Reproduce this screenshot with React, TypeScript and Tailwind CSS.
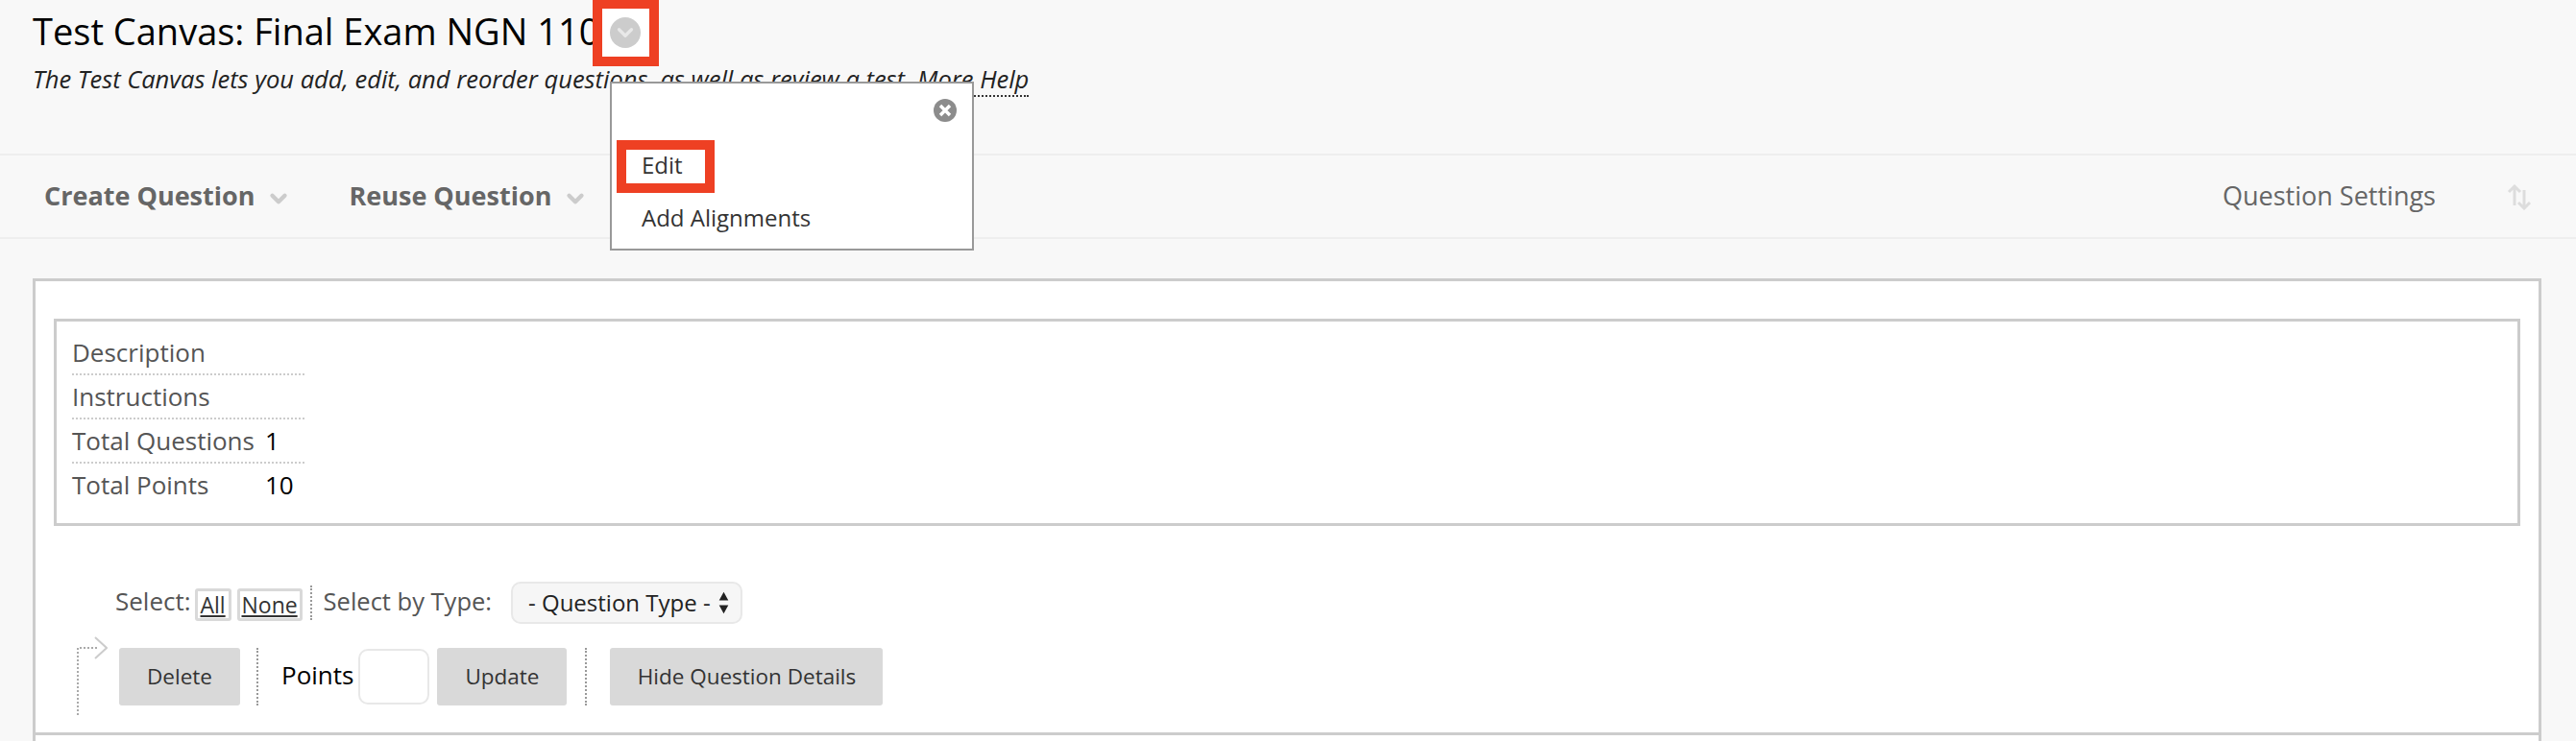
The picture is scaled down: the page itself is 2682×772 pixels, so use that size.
import { ChevronDown } from 'lucide-react';

const FONT = "font-['Open_Sans',sans-serif]";

const summary = [
  { label: 'Description', value: '' },
  { label: 'Instructions', value: '' },
  { label: 'Total Questions', value: '1' },
  { label: 'Total Points', value: '10' },
];

const GrayButton = ({ label, width }: { label: string; width: string }) => (
  <button type="button" className={`${width} h-[60px] shrink-0 rounded-[3px] bg-[#d9d9d9] text-[22.5px] text-[#333]`}>
    {label}
  </button>
);

const Separator = () => <div className="h-[60px] w-0 shrink-0 border-l-2 border-dotted border-[#999]" />;

export default function App() {
  return (
    <div className={`${FONT} relative h-[772px] w-[2682px] overflow-hidden bg-[#f8f8f8]`}>
      <header className="h-[160px] pl-[34px] pt-[6px]">
        <h1 className="whitespace-nowrap text-[38px] leading-[52px] text-black">Test Canvas: Final Exam NGN 110</h1>
        <p className="mt-[7px] whitespace-nowrap text-[25.5px] leading-[34px] text-[#222] italic">
          The Test Canvas lets you add, edit, and reorder questions, as well as review a test.{' '}
          <span className="border-b-2 border-dotted border-[#333]">More Help</span>
        </p>
      </header>

      <nav className="flex h-[89px] items-center border-y-2 border-[#eeeeee] pl-[46px] pr-[46px] text-[27px] text-[#666]">
        <span className="font-bold">Create Question</span>
        <ChevronDown className="ml-[12px] h-[26px] w-[26px] translate-y-[2px] text-[#ccc]" strokeWidth={4} />
        <span className="ml-[60px] font-bold">Reuse Question</span>
        <ChevronDown className="ml-[12px] h-[26px] w-[26px] translate-y-[2px] text-[#ccc]" strokeWidth={4} />
        <span className="ml-auto">Question Settings</span>
        <svg viewBox="0 0 26 28" className="ml-[74px] h-[28px] w-[26px] text-[#ddd]" fill="none" stroke="currentColor" strokeWidth="3">
          <path d="M8 23V3M2 9l6-6 6 6" />
          <path d="M18 7v19M12 20l6 6 6-6" />
        </svg>
      </nav>

      <main className="ml-[34px] mt-[41px] mr-[36px] h-[600px] border-[3px] border-[#ccc] bg-white">
        <section className="mx-[19px] mt-[39px] h-[216px] border-[3px] border-[#ccc] pl-[16px] pt-[10px] text-[26px] leading-[45px] text-[#555]">
          {summary.map((row, index) => (
            <div
              key={row.label}
              className={`flex h-[46px] w-[242px] ${index < summary.length - 1 ? 'border-b-2 border-dotted border-[#ccc]' : ''}`}
            >
              <span className="w-[201px] shrink-0 whitespace-nowrap">{row.label}</span>
              <span className="text-black">{row.value}</span>
            </div>
          ))}
        </section>

        <div className="mt-[58px] flex items-center pl-[83px] text-[26px] text-[#555]">
          <span className="-translate-y-[2px]">Select:</span>
          <a className="ml-[4px] flex h-[34px] w-[38px] translate-y-[2px] items-center justify-center rounded-[3px] border-[3px] border-[#d9d9d9] text-[23px] text-[#333] underline">
            All
          </a>
          <a className="ml-[6px] flex h-[34px] w-[68px] translate-y-[2px] items-center justify-center rounded-[3px] border-[3px] border-[#d9d9d9] text-[23px] text-[#333] underline">
            None
          </a>
          <div className="ml-[8px] h-[36px] border-l-2 border-dotted border-[#999]" />
          <span className="ml-[12px] -translate-y-[2px] whitespace-nowrap text-[25.5px]">Select by Type:</span>
          <div className="ml-[20px] flex h-[44px] w-[241px] items-center rounded-[10px] border-2 border-[#e8e8e8] bg-[#f6f6f6] pl-[16px] text-[24px] text-[#222]">
            <span className="whitespace-nowrap">- Question Type -</span>
            <svg viewBox="0 0 12 30" className="ml-[8px] h-[24px] w-[11px] text-[#222]" fill="currentColor">
              <path d="M6 1l6 11H0zM6 29L0 18h12z" />
            </svg>
          </div>
        </div>

        <div className="relative mt-[25px] flex h-[60px] items-center pl-[87px]">
          <GrayButton label="Delete" width="w-[126px]" />
          <div className="ml-[17px]">
            <Separator />
          </div>
          <span className="ml-[24px] -translate-y-[2px] text-[26px] text-black">Points</span>
          <div className="ml-[5px] h-[58px] w-[74px] rounded-[10px] border-2 border-[#e8e8e8] bg-white" />
          <div className="ml-[8px]">
            <GrayButton label="Update" width="w-[135px]" />
          </div>
          <div className="ml-[19px]">
            <Separator />
          </div>
          <div className="ml-[24px]">
            <GrayButton label="Hide Question Details" width="w-[284px]" />
          </div>

          <svg viewBox="0 0 32 82" className="absolute left-[43px] top-[-12px] h-[82px] w-[32px]" fill="none">
            <path d="M1 82V12H22" stroke="#aaa" strokeWidth="2" strokeDasharray="2 2" />
            <path d="M19 1l12 11-12 11" stroke="#ccc" strokeWidth="2" />
          </svg>
        </div>

        <div className="mt-[28px] border-t-[3px] border-[#ccc]" />
      </main>

      {/* red annotations and the open context menu */}
      <div className="absolute left-[617px] top-[-1px] flex h-[70px] w-[69px] items-center justify-center border-[10px] border-[#ee4023] bg-white">
        <div className="flex h-[32px] w-[32px] -translate-x-[1px] items-center justify-center rounded-full bg-[#cccccc]">
          <ChevronDown className="h-[26px] w-[26px] text-[#e8e8e8]" strokeWidth={3} />
        </div>
      </div>

      <div className="absolute left-[635px] top-[85px] h-[176px] w-[379px] border-2 border-[#999] bg-white text-[24px] text-[#333]">
        <div className="absolute right-[16px] top-[16px] flex h-[24px] w-[24px] items-center justify-center rounded-full bg-[#8c8c8c]">
          <svg viewBox="0 0 14 14" className="h-[14px] w-[14px]" stroke="white" strokeWidth="3.4">
            <path d="M2 2l10 10M12 2L2 12" />
          </svg>
        </div>
        <div className="absolute left-[5px] top-[59px] flex h-[55px] w-[102px] items-center border-[10px] border-[#ee4023] pl-[16px] leading-[32px]">
          <span className="-translate-y-[2px]">Edit</span>
        </div>
        <div className="absolute left-[31px] top-[122px]">Add Alignments</div>
      </div>
    </div>
  );
}
